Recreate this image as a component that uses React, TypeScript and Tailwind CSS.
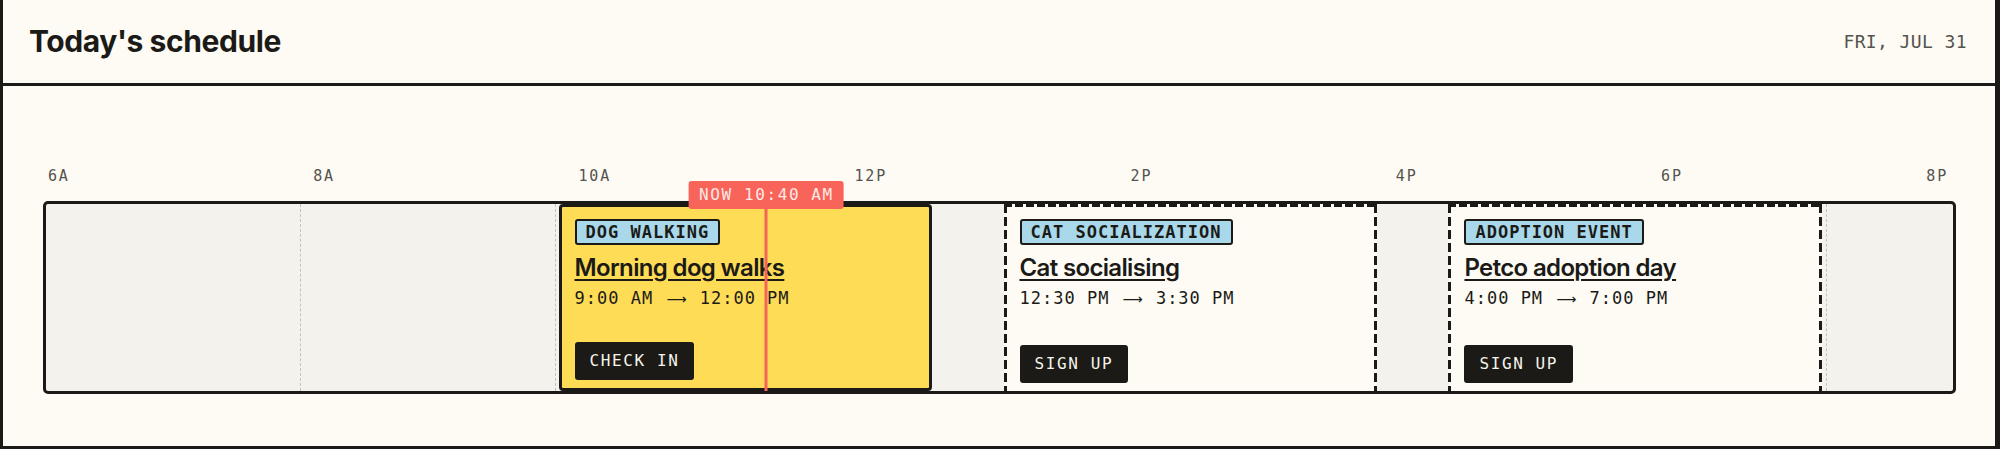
const START_HOUR = 5;
const END_HOUR = 20;
const SPAN = END_HOUR - START_HOUR;

type ScheduleEvent = {
  id: string;
  tag: string;
  title: string;
  start: number;
  end: number;
  startLabel: string;
  endLabel: string;
  action: string;
  active?: boolean;
};

const events: ScheduleEvent[] = [
  {
    id: 'dog',
    tag: 'DOG WALKING',
    title: 'Morning dog walks',
    start: 9,
    end: 12,
    startLabel: '9:00 AM',
    endLabel: '12:00 PM',
    action: 'CHECK IN',
    active: true,
  },
  {
    id: 'cat',
    tag: 'CAT SOCIALIZATION',
    title: 'Cat socialising',
    start: 12.5,
    end: 15.5,
    startLabel: '12:30 PM',
    endLabel: '3:30 PM',
    action: 'SIGN UP',
  },
  {
    id: 'adoption',
    tag: 'ADOPTION EVENT',
    title: 'Petco adoption day',
    start: 16,
    end: 19,
    startLabel: '4:00 PM',
    endLabel: '7:00 PM',
    action: 'SIGN UP',
  },
];

const hourLabels = ['6A', '8A', '10A', '12P', '2P', '4P', '6P', '8P'];
const gridHours = [7, 9, 11, 13, 15, 17, 19];
const NOW = 10 + 40 / 60;

const pct = (hour: number) => ((hour - START_HOUR) / SPAN) * 100;

const mono = "font-['DejaVu_Sans_Mono','Liberation_Mono',monospace]";

const EventCard = ({ event }: { event: ScheduleEvent }) => {
  const left = pct(event.start);
  const width = pct(event.end) - left;

  return (
    <div
      className={`absolute top-0 bottom-0 flex flex-col px-[16px] pt-[15px] pb-[8px] ${
        event.active
          ? 'rounded-[4px] border-[3px] border-[#1b1a17] bg-[#ffdc56] !px-[13px] !pt-[12px]'
          : 'bg-[#fdfbf4]'
      }`}
      style={{ left: `calc(${left}% + 4px)`, width: `calc(${width}% - 8px)` }}
    >
      {!event.active && (
        <>
          {/* dashed outline, longer dashes than the browser's own */}
          <div className="absolute top-0 right-0 left-0 h-[3px] bg-[repeating-linear-gradient(90deg,#1b1a17_0px,#1b1a17_8px,transparent_8px,transparent_11px)]" />
          <div className="absolute top-0 bottom-0 left-0 w-[3px] bg-[repeating-linear-gradient(180deg,#1b1a17_0px,#1b1a17_9px,transparent_9px,transparent_13px)]" />
          <div className="absolute top-0 right-0 bottom-0 w-[3px] bg-[repeating-linear-gradient(180deg,#1b1a17_0px,#1b1a17_9px,transparent_9px,transparent_13px)]" />
        </>
      )}
      <div>
        <span
          className={`inline-block h-[26px] rounded-[3px] border-2 border-[#1b1a17] bg-[#a8d8ea] px-[9px] text-[17px] leading-[22px] font-bold tracking-[1px] text-[#1b1a17] ${mono}`}
        >
          {event.tag}
        </span>
      </div>
      <h3 className="mt-[8px] text-[24px] leading-[30px] font-semibold tracking-[-0.65px] text-[#1b1a17] underline decoration-2 underline-offset-[3px]">
        {event.title}
      </h3>
      <p className={`mt-[4px] text-[17px] leading-[22px] tracking-[1px] text-[#1b1a17] ${mono}`}>
        {event.startLabel}{' '}
        <span className="inline-block w-[24px] text-center font-['DejaVu_Sans',sans-serif] text-[14px] tracking-normal">
          ⟶
        </span>{' '}
        {event.endLabel}
      </p>
      <div className="mt-auto">
        <button
          className={`h-[38px] rounded-[3px] bg-[#1b1a17] px-[15px] text-[16px] tracking-[1.6px] text-[#f6f3ea] ${mono}`}
        >
          {event.action}
        </button>
      </div>
    </div>
  );
};

export default function App() {
  return (
    <div className="w-full bg-[#fdfbf4] font-['Inter','Noto_Sans',sans-serif] text-[#1b1a17]">
      <div className="border-b-[4px] border-l-[3px] border-r-[5px] border-[#1b1a17]">
        <header className="flex h-[86px] items-center justify-between border-b-[3px] border-[#1b1a17] pr-[28px] pl-[26px]">
          <h1 className="text-[30px] font-bold tracking-[-0.4px]">Today's schedule</h1>
          <span className={`text-[18px] tracking-[0.4px] text-[#55534e] ${mono}`}>FRI, JUL 31</span>
        </header>

        <section className="pt-[80px] pr-[39px] pb-[52px] pl-[40px]">
          <div
            className={`mb-[15px] flex h-[20px] items-center justify-between pr-[8px] pl-[5px] text-[15px] leading-[20px] tracking-[1.8px] text-[#55534e] ${mono}`}
          >
            {hourLabels.map((label) => (
              <span key={label}>{label}</span>
            ))}
          </div>

          <div className="relative h-[193px] rounded-[5px] border-[3px] border-[#1b1a17] bg-[#f3f2ec]">
            {gridHours.map((hour) => (
              <div
                key={hour}
                className="absolute top-0 bottom-0 border-l border-dashed border-[#c4c2ba]"
                style={{ left: `${pct(hour)}%` }}
              />
            ))}

            {events.map((event) => (
              <EventCard key={event.id} event={event} />
            ))}

            {/* now indicator */}
            <div
              className="absolute top-0 bottom-0 z-10 w-[3px] -translate-x-1/2 bg-[#f4645a]"
              style={{ left: `${pct(NOW)}%` }}
            />
            <div
              className={`absolute top-[-23px] z-20 flex h-[28px] -translate-x-1/2 items-center rounded-[3px] bg-[#f8635a] px-[10px] text-[16px] tracking-[1.6px] whitespace-nowrap text-[#fde9e4] ${mono}`}
              style={{ left: `${pct(NOW)}%` }}
            >
              NOW 10:40 AM
            </div>
          </div>
        </section>
      </div>
    </div>
  );
}
